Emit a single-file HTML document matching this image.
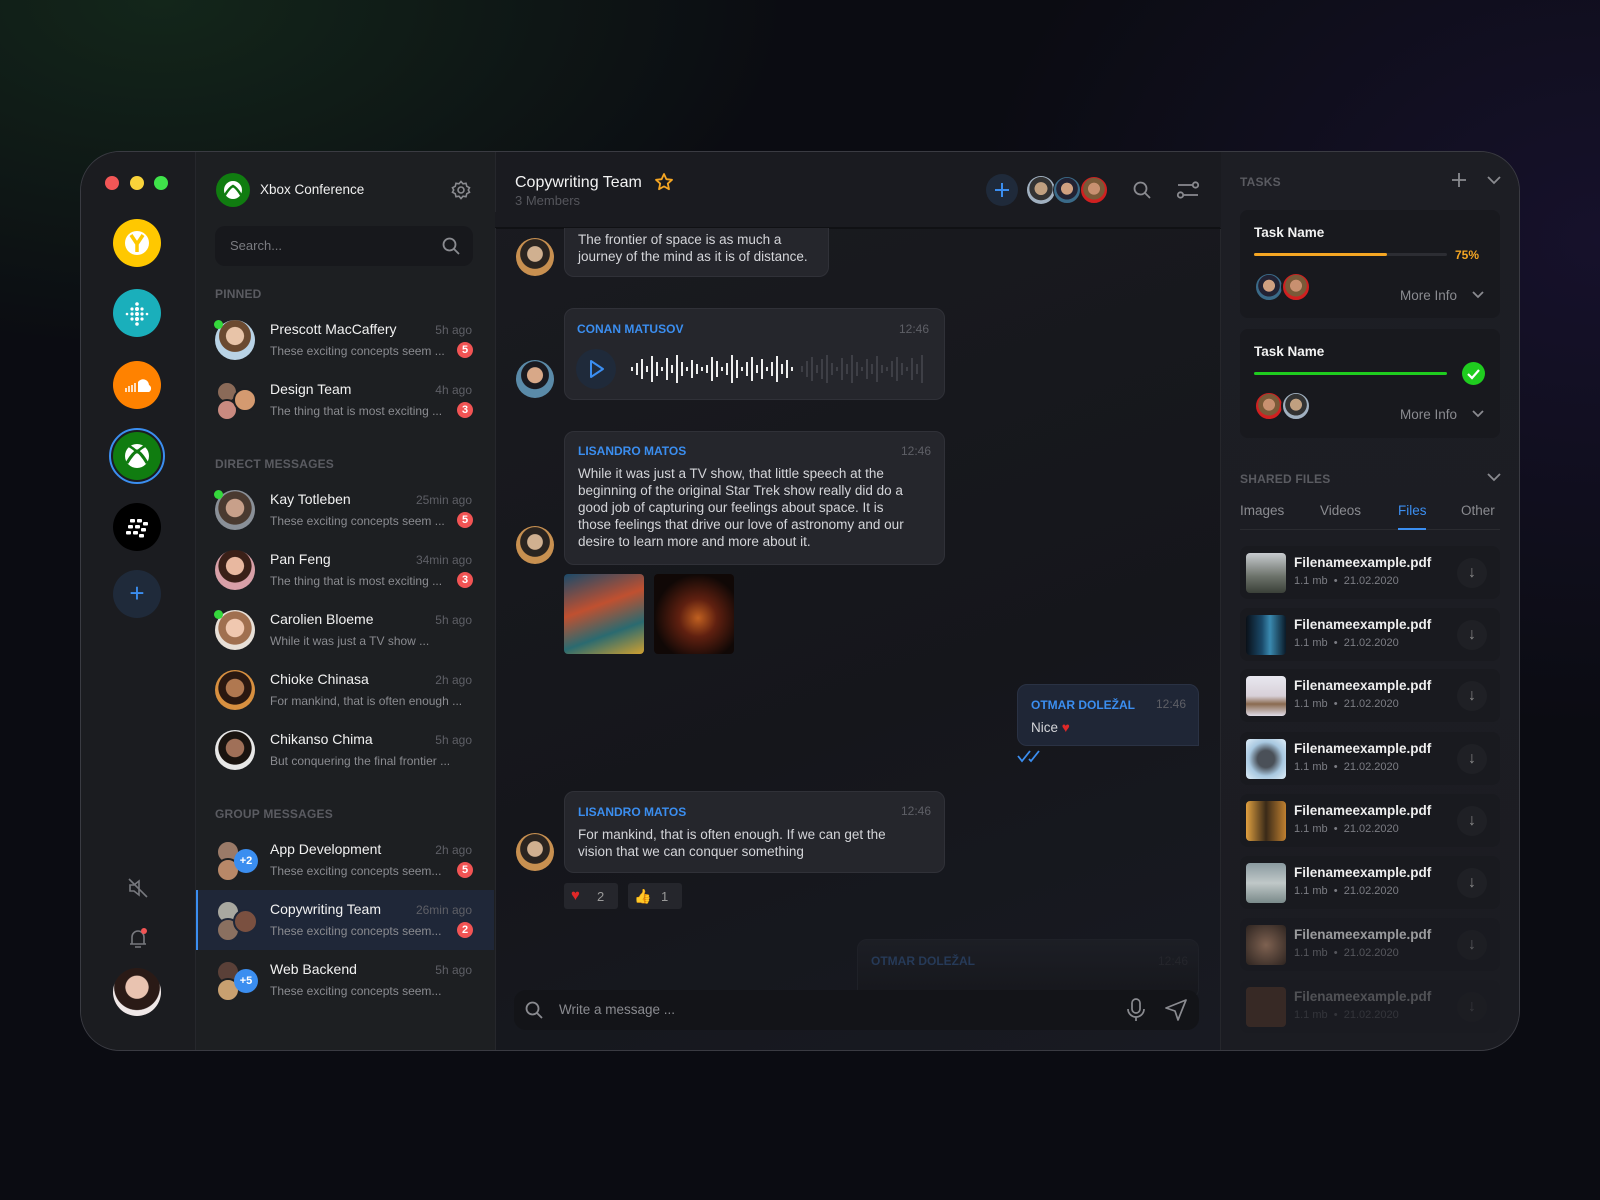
<!DOCTYPE html>
<html><head><meta charset="utf-8">
<style>
*{margin:0;padding:0;box-sizing:border-box}
body{width:1600px;height:1200px;overflow:hidden;font-family:"Liberation Sans",sans-serif;background:radial-gradient(ellipse 900px 500px at 10% 0%,#13261a 0%,transparent 70%),radial-gradient(ellipse 900px 700px at 100% 20%,#16112b 0%,transparent 70%),#0b0c12;position:relative;color:#fff}
.a{position:absolute}
.win{position:absolute;left:80px;top:151px;width:1440px;height:900px;border-radius:40px;border:1px solid #3a3b42;overflow:hidden;background:#1b1c21}
.t{position:absolute;white-space:nowrap;line-height:16px}
.c{position:absolute;border-radius:50%}
.badge{position:absolute;width:16px;height:16px;border-radius:50%;background:#f25454;color:#fff;font-size:11px;line-height:16px;text-align:center;font-weight:bold}
.nm{font-size:14px;color:#f2f2f2}
.pv{font-size:12px;color:#8a8b90}
.tm{font-size:12px;color:#5e5f66;text-align:right}
.lbl{font-size:12px;color:#5a5b61;font-weight:bold;letter-spacing:.2px}
.bub{position:absolute;background:#25262c;border:1px solid #303138;border-radius:10px}
.mname{font-size:12px;font-weight:bold;color:#3b8ef0}
.mt{font-size:13.5px;color:#d4d5d9;line-height:17px}
.fr{position:absolute;left:1240px;width:260px;height:53px;background:#191a1f;border-radius:8px}
.fr .th{position:absolute;left:6px;top:7px;width:40px;height:40px;border-radius:4px}
.fr .fn{position:absolute;left:54px;top:9px;font-size:13.5px;font-weight:bold;color:#eee}
.fr .fm{position:absolute;left:54px;top:29px;font-size:11px;color:#7c7d84}
.fr .dl{position:absolute;left:217px;top:12px;width:30px;height:30px;border-radius:50%;background:#1f2025;color:#888;text-align:center;line-height:30px;font-size:16px}
</style></head><body>
<div class="win">
 <!-- sidebar -->
 <div class="a" style="left:0;top:0;width:115px;height:900px;background:#1b1c20;border-right:1px solid #26272c"></div>
 <!-- chat list -->
 <div class="a" style="left:115px;top:0;width:300px;height:900px;background:#1d1f22;border-right:1px solid #26272c"></div>
 <!-- chat -->
 <div class="a" style="left:415px;top:0;width:725px;height:900px;background:linear-gradient(160deg,#1a1b20,#15161b 60%,#181a22);border-right:1px solid #26272c"></div>
 <div class="a" style="left:415px;top:0;width:725px;height:77px;background:#1a1b20;border-bottom:1px solid #101114"></div>
 <!-- right -->
 <div class="a" style="left:1140px;top:0;width:300px;height:900px;background:linear-gradient(180deg,#1d1e24,#1b1c22)"></div>
</div>

<!-- traffic lights -->
<div class="c" style="left:105px;top:176px;width:14px;height:14px;background:#f25656"></div>
<div class="c" style="left:130px;top:176px;width:14px;height:14px;background:#f9d33a"></div>
<div class="c" style="left:154px;top:176px;width:14px;height:14px;background:#3fe34a"></div>

<!-- server icons -->
<div class="c" style="left:113px;top:219px;width:48px;height:48px;background:#ffc800"><svg width="48" height="48"><circle cx="24" cy="24" r="12" fill="#fff"/><path d="M18 16 L24 25 L30 16 M24 25 V33" stroke="#ffc800" stroke-width="3.5" fill="none"/></svg></div>
<div class="c" style="left:113px;top:289px;width:48px;height:48px;background:#1aafbb"><svg width="48" height="48" fill="#fff"><circle cx="24" cy="15" r="1.8"/><circle cx="24" cy="20" r="2"/><circle cx="24" cy="25" r="2"/><circle cx="24" cy="30" r="2"/><circle cx="24" cy="35" r="1.8"/><circle cx="19" cy="20" r="1.6"/><circle cx="19" cy="25" r="1.6"/><circle cx="19" cy="30" r="1.6"/><circle cx="29" cy="20" r="1.6"/><circle cx="29" cy="25" r="1.6"/><circle cx="29" cy="30" r="1.6"/><circle cx="14" cy="25" r="1.3"/><circle cx="34" cy="25" r="1.3"/></svg></div>
<div class="c" style="left:113px;top:361px;width:48px;height:48px;background:#ff8200"><svg width="48" height="48"><path d="M25 21 a6 6 0 0 1 11 3 a4 4 0 0 1 0 7 H25 Z" fill="#fff"/><g stroke="#fff" stroke-width="1.5"><path d="M22 22v9M19 24v7M16 25v6M13 27v4"/></g></svg></div>
<div class="c" style="left:109px;top:428px;width:56px;height:56px;border:2px solid #3b8ef0"></div>
<div class="c" style="left:113px;top:432px;width:48px;height:48px;background:#107c10"><svg width="48" height="48"><circle cx="24" cy="24" r="12" fill="#fff"/><path d="M14 31 C18 24 22 20 24 19 C26 20 30 24 34 31" stroke="#107c10" stroke-width="3" fill="none"/><path d="M16 14 C20 16 23 19 24 20 C25 19 28 16 32 14" stroke="#107c10" stroke-width="2.5" fill="none"/></svg></div>
<div class="c" style="left:113px;top:503px;width:48px;height:48px;background:#000"><svg width="48" height="48" fill="#fff"><rect x="17" y="16" width="5" height="3.5" rx="1"/><rect x="24" y="16" width="5" height="3.5" rx="1"/><rect x="15" y="22" width="5" height="3.5" rx="1"/><rect x="22" y="22" width="5" height="3.5" rx="1"/><rect x="30" y="19" width="5" height="3.5" rx="1"/><rect x="13" y="28" width="5" height="3.5" rx="1"/><rect x="20" y="28" width="5" height="3.5" rx="1"/><rect x="28" y="25" width="5" height="3.5" rx="1"/><rect x="26" y="31" width="5" height="3.5" rx="1"/></svg></div>
<div class="c" style="left:113px;top:570px;width:48px;height:48px;background:#1f2a3a;color:#3b8ef0;font-size:26px;text-align:center;line-height:46px">+</div>
<svg class="a" style="left:127px;top:877px" width="22" height="22" fill="none" stroke="#77787e" stroke-width="1.6"><path d="M3 8h4l5-4v14l-5-4H3z"/><path d="M2 2l18 18"/></svg>
<svg class="a" style="left:126px;top:926px" width="24" height="24" fill="none" stroke="#77787e" stroke-width="1.6"><path d="M6 18V11a6 6 0 0 1 12 0v7M4 18h16M9 21h6"/><circle cx="18" cy="5" r="3" fill="#f25454" stroke="none"/></svg>
<div class="c" style="left:113px;top:968px;width:48px;height:48px;background:radial-gradient(circle at 50% 40%,#e9c3b0 0 30%,#2a1a16 32% 60%,#f0e8e8 62%)"></div>

<!-- chat list header -->
<div class="c" style="left:216px;top:173px;width:34px;height:34px;background:#107c10"><svg width="34" height="34"><circle cx="17" cy="17" r="9" fill="#fff"/><path d="M9 22 C12 17 15 14 17 13 C19 14 22 17 25 22" stroke="#107c10" stroke-width="2.4" fill="none"/></svg></div>
<div class="t" style="left:260px;top:182px;font-size:13.5px;color:#f0f0f0">Xbox Conference</div>
<svg class="a" style="left:451px;top:180px" width="20" height="20" fill="none" stroke="#8a8b90" stroke-width="1.6"><circle cx="10" cy="10" r="3"/><path d="M10 1.5l2 2.3 3-.5.8 3 2.7 1.4-1.2 2.3 1.2 2.3-2.7 1.4-.8 3-3-.5-2 2.3-2-2.3-3 .5-.8-3L1.5 12.3 2.7 10 1.5 7.7l2.7-1.4.8-3 3 .5z"/></svg>
<div class="a" style="left:215px;top:226px;width:258px;height:40px;background:#17181c;border-radius:10px"></div>
<div class="t" style="left:230px;top:238px;font-size:13px;color:#7a7b80">Search...</div>
<svg class="a" style="left:441px;top:236px" width="20" height="20" fill="none" stroke="#8a8b90" stroke-width="1.8"><circle cx="8.5" cy="8.5" r="6"/><path d="M13 13l5 5"/></svg>

<div class="t lbl" style="left:215px;top:286px">PINNED</div>
<div class="t lbl" style="left:215px;top:456px">DIRECT MESSAGES</div>
<div class="t lbl" style="left:215px;top:806px">GROUP MESSAGES</div>

<!-- selected row -->
<div class="a" style="left:196px;top:890px;width:298px;height:60px;background:#1f2738;border-left:2px solid #3b8ef0"></div>

<!-- pinned -->
<div class="c" style="left:215px;top:320px;width:40px;height:40px;background:radial-gradient(circle at 50% 40%,#e8c4a8 0 28%,#6b4a30 30% 50%,#b9d3e6 52%)"></div>
<div class="c" style="left:214px;top:320px;width:9px;height:9px;background:#35d83c"></div>
<div class="t nm" style="left:270px;top:321px">Prescott MacCaffery</div>
<div class="t pv" style="left:270px;top:343px">These exciting concepts seem ...</div>
<div class="t tm" style="left:412px;width:60px;top:322px">5h ago</div>
<div class="badge" style="left:457px;top:342px">5</div>

<div class="c" style="left:216px;top:381px;width:22px;height:22px;background:#8a6a58;border:2px solid #1d1f22"></div>
<div class="c" style="left:216px;top:399px;width:22px;height:22px;background:#c98a80;border:2px solid #1d1f22"></div>
<div class="c" style="left:233px;top:388px;width:24px;height:24px;background:#d49a70;border:2px solid #1d1f22"></div>
<div class="t nm" style="left:270px;top:381px">Design Team</div>
<div class="t pv" style="left:270px;top:403px">The thing that is most exciting ...</div>
<div class="t tm" style="left:412px;width:60px;top:382px">4h ago</div>
<div class="badge" style="left:457px;top:402px">3</div>

<!-- DMs -->
<div class="c" style="left:215px;top:490px;width:40px;height:40px;background:radial-gradient(circle at 50% 45%,#c8a08a 0 30%,#4a3a30 32% 55%,#8a9098 57%)"></div>
<div class="c" style="left:214px;top:490px;width:9px;height:9px;background:#35d83c"></div>
<div class="t nm" style="left:270px;top:491px">Kay Totleben</div>
<div class="t pv" style="left:270px;top:513px">These exciting concepts seem ...</div>
<div class="t tm" style="left:402px;width:70px;top:492px">25min ago</div>
<div class="badge" style="left:457px;top:512px">5</div>

<div class="c" style="left:215px;top:550px;width:40px;height:40px;background:radial-gradient(circle at 50% 40%,#e8b8a0 0 28%,#3a2018 30% 52%,#d8a0a8 54%)"></div>
<div class="t nm" style="left:270px;top:551px">Pan Feng</div>
<div class="t pv" style="left:270px;top:573px">The thing that is most exciting ...</div>
<div class="t tm" style="left:402px;width:70px;top:552px">34min ago</div>
<div class="badge" style="left:457px;top:572px">3</div>

<div class="c" style="left:215px;top:610px;width:40px;height:40px;background:radial-gradient(circle at 50% 45%,#f0c8b0 0 30%,#a07050 32% 55%,#e8e0d8 57%)"></div>
<div class="c" style="left:214px;top:610px;width:9px;height:9px;background:#35d83c"></div>
<div class="t nm" style="left:270px;top:611px">Carolien Bloeme</div>
<div class="t pv" style="left:270px;top:633px">While it was just a TV show ...</div>
<div class="t tm" style="left:412px;width:60px;top:612px">5h ago</div>

<div class="c" style="left:215px;top:670px;width:40px;height:40px;background:radial-gradient(circle at 50% 45%,#b07850 0 30%,#2a1810 32% 55%,#d89040 57%)"></div>
<div class="t nm" style="left:270px;top:671px">Chioke Chinasa</div>
<div class="t pv" style="left:270px;top:693px">For mankind, that is often enough ...</div>
<div class="t tm" style="left:412px;width:60px;top:672px">2h ago</div>

<div class="c" style="left:215px;top:730px;width:40px;height:40px;background:radial-gradient(circle at 50% 45%,#a07058 0 30%,#1a1410 32% 55%,#e8e8e8 57%)"></div>
<div class="t nm" style="left:270px;top:731px">Chikanso Chima</div>
<div class="t pv" style="left:270px;top:753px">But conquering the final frontier ...</div>
<div class="t tm" style="left:412px;width:60px;top:732px">5h ago</div>

<!-- groups -->
<div class="c" style="left:216px;top:840px;width:24px;height:24px;background:#9a7a68;border:2px solid #1d1f22"></div>
<div class="c" style="left:216px;top:858px;width:24px;height:24px;background:#b88868;border:2px solid #1d1f22"></div>
<div class="c" style="left:234px;top:849px;width:24px;height:24px;background:#3b8ef0;font-size:11px;font-weight:bold;text-align:center;line-height:24px">+2</div>
<div class="t nm" style="left:270px;top:841px">App Development</div>
<div class="t pv" style="left:270px;top:863px">These exciting concepts seem...</div>
<div class="t tm" style="left:412px;width:60px;top:842px">2h ago</div>
<div class="badge" style="left:457px;top:862px">5</div>

<div class="c" style="left:216px;top:900px;width:24px;height:24px;background:#a8a8a0;border:2px solid #1f2738"></div>
<div class="c" style="left:216px;top:918px;width:24px;height:24px;background:#8a7060;border:2px solid #1f2738"></div>
<div class="c" style="left:233px;top:909px;width:25px;height:25px;background:#7a5040;border:2px solid #1f2738"></div>
<div class="t nm" style="left:270px;top:901px">Copywriting Team</div>
<div class="t pv" style="left:270px;top:923px">These exciting concepts seem...</div>
<div class="t tm" style="left:402px;width:70px;top:902px">26min ago</div>
<div class="badge" style="left:457px;top:922px">2</div>

<div class="c" style="left:216px;top:960px;width:24px;height:24px;background:#5a4038;border:2px solid #1d1f22"></div>
<div class="c" style="left:216px;top:978px;width:24px;height:24px;background:#c8a070;border:2px solid #1d1f22"></div>
<div class="c" style="left:234px;top:969px;width:24px;height:24px;background:#3b8ef0;font-size:11px;font-weight:bold;text-align:center;line-height:24px">+5</div>
<div class="t nm" style="left:270px;top:961px">Web Backend</div>
<div class="t pv" style="left:270px;top:983px">These exciting concepts seem...</div>
<div class="t tm" style="left:412px;width:60px;top:962px">5h ago</div>

<!-- chat header -->
<div class="t" style="left:515px;top:173px;font-size:16px;color:#f2f2f2;line-height:20px">Copywriting Team</div>
<svg class="a" style="left:654px;top:172px" width="20" height="20" fill="none" stroke="#f5a623" stroke-width="1.8"><path d="M10 2l2.4 5.2 5.6.6-4.2 3.8 1.2 5.6L10 14.4 5 17.2l1.2-5.6L2 7.8l5.6-.6z" stroke-linejoin="round"/></svg>
<div class="t" style="left:515px;top:193px;font-size:13px;color:#55565c">3 Members</div>
<div class="c" style="left:986px;top:174px;width:32px;height:32px;background:#1f2a3a"><svg width="32" height="32" stroke="#3b8ef0" stroke-width="2"><path d="M16 9v14M9 16h14"/></svg></div>
<div class="c" style="left:1027px;top:176px;width:28px;height:28px;background:radial-gradient(circle at 50% 45%,#c0a080 0 30%,#333 32% 55%,#a0b0c0 57%)"></div>
<div class="c" style="left:1053px;top:176px;width:28px;height:28px;background:radial-gradient(circle at 50% 45%,#d0a080 0 30%,#223 32% 55%,#3a6a88 57%);border:1px solid #1a1b20"></div>
<div class="c" style="left:1080px;top:176px;width:28px;height:28px;background:radial-gradient(circle at 50% 45%,#c89070 0 30%,#7a5a38 32% 55%,#d02020 57%);border:1px solid #1a1b20"></div>
<svg class="a" style="left:1132px;top:180px" width="20" height="20" fill="none" stroke="#8a8b90" stroke-width="1.8"><circle cx="8.5" cy="8.5" r="6"/><path d="M13 13l5 5"/></svg>
<svg class="a" style="left:1176px;top:180px" width="24" height="20" fill="none" stroke="#8a8b90" stroke-width="1.8"><path d="M2 5h14M8 15h14"/><circle cx="19.5" cy="5" r="2.7"/><circle cx="4.5" cy="15" r="2.7"/></svg>

<!-- messages -->
<div class="bub" style="left:564px;top:220px;width:265px;height:57px;border-top:none;border-radius:0 0 10px 10px"></div>
<div class="a" style="left:495px;top:212px;width:725px;height:16px;background:#1a1b20;border-bottom:1px solid #101114"></div>
<div class="t mt" style="left:578px;top:231px">The frontier of space is as much a</div>
<div class="t mt" style="left:578px;top:248px">journey of the mind as it is of distance.</div>
<div class="c" style="left:516px;top:238px;width:38px;height:38px;background:radial-gradient(circle at 50% 42%,#d0b090 0 26%,#2a2420 28% 50%,#c89050 52%)"></div>

<div class="bub" style="left:564px;top:308px;width:381px;height:92px"></div>
<div class="t mname" style="left:577px;top:321px">CONAN MATUSOV</div>
<div class="t tm" style="left:869px;width:60px;top:321px">12:46</div>
<div class="c" style="left:576px;top:349px;width:40px;height:40px;background:#1f2a3a"><svg width="40" height="40" fill="none" stroke="#3b8ef0" stroke-width="2"><path d="M15 12l12 8-12 8z" stroke-linejoin="round"/></svg></div>
<svg class="a" style="left:631px;top:352px" width="300" height="34">
<g fill="#eee">
<rect x="0" y="15" width="2" height="4"/><rect x="5" y="11" width="2" height="12"/><rect x="10" y="7" width="2" height="20"/><rect x="15" y="14" width="2" height="6"/><rect x="20" y="4" width="2" height="26"/><rect x="25" y="10" width="2" height="14"/><rect x="30" y="15" width="2" height="4"/><rect x="35" y="6" width="2" height="22"/><rect x="40" y="13" width="2" height="8"/><rect x="45" y="3" width="2" height="28"/><rect x="50" y="10" width="2" height="14"/><rect x="55" y="15" width="2" height="4"/><rect x="60" y="8" width="2" height="18"/><rect x="65" y="12" width="2" height="10"/><rect x="70" y="15" width="2" height="4"/><rect x="75" y="13" width="2" height="8"/><rect x="80" y="5" width="2" height="24"/><rect x="85" y="9" width="2" height="16"/><rect x="90" y="15" width="2" height="4"/><rect x="95" y="11" width="2" height="12"/><rect x="100" y="3" width="2" height="28"/><rect x="105" y="8" width="2" height="18"/><rect x="110" y="15" width="2" height="4"/><rect x="115" y="10" width="2" height="14"/><rect x="120" y="5" width="2" height="24"/><rect x="125" y="13" width="2" height="8"/><rect x="130" y="7" width="2" height="20"/><rect x="135" y="15" width="2" height="4"/><rect x="140" y="10" width="2" height="14"/><rect x="145" y="4" width="2" height="26"/><rect x="150" y="12" width="2" height="10"/><rect x="155" y="8" width="2" height="18"/><rect x="160" y="15" width="2" height="4"/>
</g>
<g fill="#3e3f46">
<rect x="170" y="14" width="2" height="6"/><rect x="175" y="9" width="2" height="16"/><rect x="180" y="5" width="2" height="24"/><rect x="185" y="13" width="2" height="8"/><rect x="190" y="7" width="2" height="20"/><rect x="195" y="3" width="2" height="28"/><rect x="200" y="11" width="2" height="12"/><rect x="205" y="15" width="2" height="4"/><rect x="210" y="6" width="2" height="22"/><rect x="215" y="12" width="2" height="10"/><rect x="220" y="3" width="2" height="28"/><rect x="225" y="10" width="2" height="14"/><rect x="230" y="15" width="2" height="4"/><rect x="235" y="7" width="2" height="20"/><rect x="240" y="12" width="2" height="10"/><rect x="245" y="4" width="2" height="26"/><rect x="250" y="13" width="2" height="8"/><rect x="255" y="15" width="2" height="4"/><rect x="260" y="9" width="2" height="16"/><rect x="265" y="5" width="2" height="24"/><rect x="270" y="11" width="2" height="12"/><rect x="275" y="15" width="2" height="4"/><rect x="280" y="6" width="2" height="22"/><rect x="285" y="12" width="2" height="10"/><rect x="290" y="3" width="2" height="28"/>
</g></svg>
<div class="c" style="left:516px;top:360px;width:38px;height:38px;background:radial-gradient(circle at 50% 40%,#d8a888 0 26%,#1a1a20 28% 46%,#5a8aa8 48%)"></div>

<div class="bub" style="left:564px;top:431px;width:381px;height:134px"></div>
<div class="t mname" style="left:578px;top:443px">LISANDRO MATOS</div>
<div class="t tm" style="left:871px;width:60px;top:443px">12:46</div>
<div class="t mt" style="left:578px;top:465px">While it was just a TV show, that little speech at the</div>
<div class="t mt" style="left:578px;top:482px">beginning of the original Star Trek show really did do a</div>
<div class="t mt" style="left:578px;top:499px">good job of capturing our feelings about space. It is</div>
<div class="t mt" style="left:578px;top:516px">those feelings that drive our love of astronomy and our</div>
<div class="t mt" style="left:578px;top:533px">desire to learn more and more about it.</div>
<div class="c" style="left:516px;top:526px;width:38px;height:38px;background:radial-gradient(circle at 50% 42%,#d0b090 0 26%,#2a2420 28% 50%,#c89050 52%)"></div>
<div class="a" style="left:564px;top:574px;width:80px;height:80px;border-radius:4px;background:linear-gradient(160deg,#1a4a6a 0%,#c05030 40%,#2a6a70 70%,#d0a030 100%)"></div>
<div class="a" style="left:654px;top:574px;width:80px;height:80px;border-radius:4px;background:radial-gradient(circle at 55% 55%,#c06020 0%,#602010 30%,#100806 70%)"></div>

<div class="a" style="left:1017px;top:684px;width:182px;height:62px;background:#1f2636;border:1px solid #2a3244;border-radius:10px 10px 0 10px"></div>
<div class="t mname" style="left:1031px;top:697px">OTMAR DOLEŽAL</div>
<div class="t tm" style="left:1126px;width:60px;top:696px">12:46</div>
<div class="t mt" style="left:1031px;top:719px">Nice <span style="color:#e02828">♥</span></div>
<svg class="a" style="left:1017px;top:749px" width="30" height="14" fill="none" stroke="#3b8ef0" stroke-width="1.8"><path d="M1 7l4 5 8-10M12 10l2 2 8-10"/></svg>

<div class="bub" style="left:564px;top:791px;width:381px;height:82px"></div>
<div class="t mname" style="left:578px;top:804px">LISANDRO MATOS</div>
<div class="t tm" style="left:871px;width:60px;top:803px">12:46</div>
<div class="t mt" style="left:578px;top:826px">For mankind, that is often enough. If we can get the</div>
<div class="t mt" style="left:578px;top:843px">vision that we can conquer something</div>
<div class="c" style="left:516px;top:833px;width:38px;height:38px;background:radial-gradient(circle at 50% 42%,#d0b090 0 26%,#2a2420 28% 50%,#c89050 52%)"></div>
<div class="a" style="left:564px;top:883px;width:54px;height:26px;background:#25262c;border-radius:3px"></div>
<div class="t" style="left:571px;top:888px;font-size:15px;color:#e02828">♥</div><div class="t" style="left:597px;top:889px;font-size:13px;color:#999">2</div>
<div class="a" style="left:628px;top:883px;width:54px;height:26px;background:#25262c;border-radius:3px"></div>
<div class="t" style="left:634px;top:888px;font-size:14px;color:#f5c030">👍</div><div class="t" style="left:661px;top:889px;font-size:13px;color:#999">1</div>

<div class="a" style="left:857px;top:939px;width:342px;height:60px;background:linear-gradient(#1c1e25,#16171c);border:1px solid #1f2128;border-radius:10px"></div>
<div class="t mname" style="left:871px;top:953px;color:#263a58">OTMAR DOLEŽAL</div>
<div class="t tm" style="left:1128px;width:60px;top:953px;color:#25262c">12:46</div>

<div class="a" style="left:514px;top:990px;width:685px;height:40px;background:#131418;border-radius:12px"></div>
<svg class="a" style="left:524px;top:1000px" width="20" height="20" fill="none" stroke="#8a8b90" stroke-width="1.8"><circle cx="8.5" cy="8.5" r="6"/><path d="M13 13l5 5"/></svg>
<div class="t" style="left:559px;top:1002px;font-size:13.5px;color:#8a8b90">Write a message ...</div>
<svg class="a" style="left:1126px;top:998px" width="20" height="24" fill="none" stroke="#8a8b90" stroke-width="1.7"><rect x="6" y="1" width="8" height="14" rx="4"/><path d="M2 11a8 8 0 0 0 16 0M10 19v4"/></svg>
<svg class="a" style="left:1164px;top:998px" width="24" height="24" fill="none" stroke="#8a8b90" stroke-width="1.7" stroke-linejoin="round"><path d="M22 2L2 10l9 3 3 9z"/></svg>

<!-- right panel -->
<div class="t lbl" style="left:1240px;top:174px">TASKS</div>
<svg class="a" style="left:1452px;top:173px" width="14" height="14" stroke="#8a8b90" stroke-width="1.8"><path d="M7 0v14M0 7h14"/></svg>
<svg class="a" style="left:1487px;top:176px" width="14" height="9" fill="none" stroke="#8a8b90" stroke-width="1.8"><path d="M1 1l6 6 6-6"/></svg>

<div class="a" style="left:1240px;top:210px;width:260px;height:108px;background:#18191e;border-radius:8px"></div>
<div class="t" style="left:1254px;top:225px;font-size:13.5px;font-weight:bold;color:#f2f2f2">Task Name</div>
<div class="a" style="left:1254px;top:253px;width:193px;height:3px;background:#2c2d33;border-radius:2px"></div>
<div class="a" style="left:1254px;top:253px;width:133px;height:3px;background:#f5a623;border-radius:2px"></div>
<div class="t" style="left:1455px;top:247px;font-size:12px;font-weight:bold;color:#f5a623">75%</div>
<div class="c" style="left:1254px;top:272px;width:30px;height:30px;background:radial-gradient(circle at 50% 45%,#d0a080 0 30%,#223 32% 55%,#3a6a88 57%);border:2px solid #18191e"></div>
<div class="c" style="left:1281px;top:272px;width:30px;height:30px;background:radial-gradient(circle at 50% 45%,#c89070 0 30%,#7a5a38 32% 55%,#d02020 57%);border:2px solid #18191e"></div>
<div class="t" style="left:1400px;top:288px;font-size:13.5px;color:#8a8b90">More Info</div>
<svg class="a" style="left:1472px;top:291px" width="12" height="8" fill="none" stroke="#8a8b90" stroke-width="1.8"><path d="M1 1l5 5 5-5"/></svg>

<div class="a" style="left:1240px;top:329px;width:260px;height:109px;background:#18191e;border-radius:8px"></div>
<div class="t" style="left:1254px;top:344px;font-size:13.5px;font-weight:bold;color:#f2f2f2">Task Name</div>
<div class="a" style="left:1254px;top:372px;width:193px;height:3px;background:#1fcc1f;border-radius:2px"></div>
<div class="c" style="left:1462px;top:362px;width:23px;height:23px;background:#1fcc1f"><svg width="23" height="23" fill="none" stroke="#fff" stroke-width="2.2"><path d="M6 12l4 4 7-8"/></svg></div>
<div class="c" style="left:1254px;top:391px;width:30px;height:30px;background:radial-gradient(circle at 50% 45%,#c89070 0 30%,#7a5a38 32% 55%,#d02020 57%);border:2px solid #18191e"></div>
<div class="c" style="left:1281px;top:391px;width:30px;height:30px;background:radial-gradient(circle at 50% 45%,#c0a080 0 30%,#333 32% 55%,#a0b0c0 57%);border:2px solid #18191e"></div>
<div class="t" style="left:1400px;top:407px;font-size:13.5px;color:#8a8b90">More Info</div>
<svg class="a" style="left:1472px;top:410px" width="12" height="8" fill="none" stroke="#8a8b90" stroke-width="1.8"><path d="M1 1l5 5 5-5"/></svg>

<div class="t lbl" style="left:1240px;top:471px">SHARED FILES</div>
<svg class="a" style="left:1487px;top:473px" width="14" height="9" fill="none" stroke="#8a8b90" stroke-width="1.8"><path d="M1 1l6 6 6-6"/></svg>
<div class="t" style="left:1240px;top:503px;font-size:13.5px;color:#8a8b90">Images</div>
<div class="t" style="left:1320px;top:503px;font-size:13.5px;color:#8a8b90">Videos</div>
<div class="t" style="left:1398px;top:503px;font-size:13.5px;color:#3b8ef0">Files</div>
<div class="t" style="left:1461px;top:503px;font-size:13.5px;color:#8a8b90">Other</div>
<div class="a" style="left:1240px;top:529px;width:260px;height:1px;background:#2a2b30"></div>
<div class="a" style="left:1398px;top:528px;width:28px;height:2px;background:#3b8ef0"></div>

<div class="fr" style="top:546px"><div class="th" style="background:linear-gradient(#c8ccd0,#6a7068 60%,#3a4038)"></div><div class="fn">Filenameexample.pdf</div><div class="fm">1.1 mb &nbsp;•&nbsp; 21.02.2020</div><div class="dl">↓</div></div>
<div class="fr" style="top:608px"><div class="th" style="background:linear-gradient(90deg,#0a1018,#1a4a6a 40%,#3a8ab0 60%,#0a1a28)"></div><div class="fn">Filenameexample.pdf</div><div class="fm">1.1 mb &nbsp;•&nbsp; 21.02.2020</div><div class="dl">↓</div></div>
<div class="fr" style="top:669px"><div class="th" style="background:linear-gradient(#e8e8f0,#d8d0d8 50%,#8a6a50 70%,#e0dce8)"></div><div class="fn">Filenameexample.pdf</div><div class="fm">1.1 mb &nbsp;•&nbsp; 21.02.2020</div><div class="dl">↓</div></div>
<div class="fr" style="top:732px"><div class="th" style="background:radial-gradient(circle,#4a5058 0 30%,#a8c8e0 60%,#e0eef8)"></div><div class="fn">Filenameexample.pdf</div><div class="fm">1.1 mb &nbsp;•&nbsp; 21.02.2020</div><div class="dl">↓</div></div>
<div class="fr" style="top:794px"><div class="th" style="background:linear-gradient(90deg,#e0a040,#3a2a18 50%,#c08030)"></div><div class="fn">Filenameexample.pdf</div><div class="fm">1.1 mb &nbsp;•&nbsp; 21.02.2020</div><div class="dl">↓</div></div>
<div class="fr" style="top:856px"><div class="th" style="background:linear-gradient(#8a9aa0,#c0c8c8 50%,#7a8a8a)"></div><div class="fn">Filenameexample.pdf</div><div class="fm">1.1 mb &nbsp;•&nbsp; 21.02.2020</div><div class="dl">↓</div></div>
<div class="fr" style="top:918px;opacity:.6"><div class="th" style="background:radial-gradient(circle,#c09070,#3a2a20)"></div><div class="fn">Filenameexample.pdf</div><div class="fm">1.1 mb &nbsp;•&nbsp; 21.02.2020</div><div class="dl">↓</div></div>
<div class="fr" style="top:980px;opacity:.25"><div class="th" style="background:#8a5030"></div><div class="fn">Filenameexample.pdf</div><div class="fm">1.1 mb &nbsp;•&nbsp; 21.02.2020</div><div class="dl">↓</div></div>
</body></html>
